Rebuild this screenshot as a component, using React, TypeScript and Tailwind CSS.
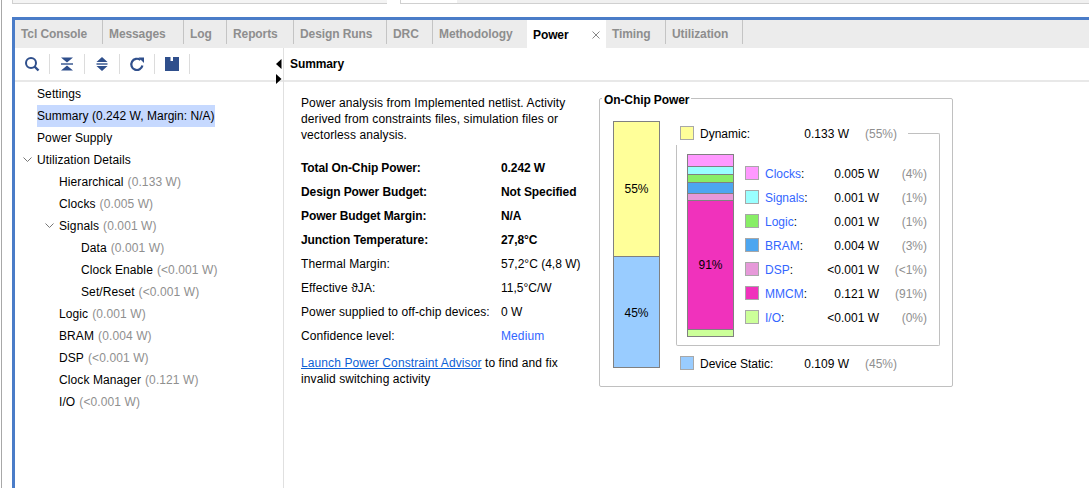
import React from 'react';

const tabs = [
  { label: 'Tcl Console', width: 'w-[88px]' },
  { label: 'Messages', width: 'w-[81px]' },
  { label: 'Log', width: 'w-[43px]' },
  { label: 'Reports', width: 'w-[67px]' },
  { label: 'Design Runs', width: 'w-[93px]' },
  { label: 'DRC', width: 'w-[46px]' },
  { label: 'Methodology', width: 'w-[95px]' },
];

const treeRows = [
  { label: 'Settings', indent: 'pl-[22px]' },
  { label: 'Summary (0.242 W, Margin: N/A)', indent: 'pl-[22px]', selected: true },
  { label: 'Power Supply', indent: 'pl-[22px]' },
  { label: 'Utilization Details', indent: 'pl-[22px]', chevron: 'left-[8px]' },
  { label: 'Hierarchical', value: '(0.133 W)', indent: 'pl-[44px]' },
  { label: 'Clocks', value: '(0.005 W)', indent: 'pl-[44px]' },
  { label: 'Signals', value: '(0.001 W)', indent: 'pl-[44px]', chevron: 'left-[30px]' },
  { label: 'Data', value: '(0.001 W)', indent: 'pl-[66px]' },
  { label: 'Clock Enable', value: '(<0.001 W)', indent: 'pl-[66px]' },
  { label: 'Set/Reset', value: '(<0.001 W)', indent: 'pl-[66px]' },
  { label: 'Logic', value: '(0.001 W)', indent: 'pl-[44px]' },
  { label: 'BRAM', value: '(0.004 W)', indent: 'pl-[44px]' },
  { label: 'DSP', value: '(<0.001 W)', indent: 'pl-[44px]' },
  { label: 'Clock Manager', value: '(0.121 W)', indent: 'pl-[44px]' },
  { label: 'I/O', value: '(<0.001 W)', indent: 'pl-[44px]' },
];

const summaryRows = [
  { label: 'Total On-Chip Power:', value: '0.242 W', bold: true },
  { label: 'Design Power Budget:', value: 'Not Specified', bold: true },
  { label: 'Power Budget Margin:', value: 'N/A', bold: true },
  { label: 'Junction Temperature:', value: '27,8°C', bold: true },
  { label: 'Thermal Margin:', value: '57,2°C (4,8 W)' },
  { label: 'Effective ϑJA:', value: '11,5°C/W' },
  { label: 'Power supplied to off-chip devices:', value: '0 W' },
  { label: 'Confidence level:', value: 'Medium', link: true },
];

const segments = [
  { color: 'bg-[#ff99ff]', height: 'h-[12px]' },
  { color: 'bg-[#99ffff]', height: 'h-[8px]' },
  { color: 'bg-[#88ee66]', height: 'h-[8px]' },
  { color: 'bg-[#4da6f0]', height: 'h-[11px]' },
  { color: 'bg-[#e699d9]', height: 'h-[7px]' },
  { color: 'bg-[#f032bc]', height: 'h-[129px]', label: '91%' },
  { color: 'bg-[#ccff99]', height: 'h-[6px]' },
];

const legend = [
  { name: 'Clocks', color: 'bg-[#ff99ff]', watts: '0.005 W', pct: '(4%)' },
  { name: 'Signals', color: 'bg-[#99ffff]', watts: '0.001 W', pct: '(1%)' },
  { name: 'Logic', color: 'bg-[#88ee66]', watts: '0.001 W', pct: '(1%)' },
  { name: 'BRAM', color: 'bg-[#4da6f0]', watts: '0.004 W', pct: '(3%)' },
  { name: 'DSP', color: 'bg-[#e699d9]', watts: '<0.001 W', pct: '(<1%)' },
  { name: 'MMCM', color: 'bg-[#f032bc]', watts: '0.121 W', pct: '(91%)' },
  { name: 'I/O', color: 'bg-[#ccff99]', watts: '<0.001 W', pct: '(0%)' },
];

const ICON = '#2f4f8c';

const ToolIcon = ({ children }: { children: React.ReactNode }) => (
  <div className="flex h-[20px] w-[35px] items-center justify-center border-r border-[#dcdcdc]">
    <svg width="16" height="16" viewBox="0 0 16 16" fill="none">
      {children}
    </svg>
  </div>
);

const Chevron = ({ className }: { className: string }) => (
  <svg className={className} width="9" height="6" viewBox="0 0 9 6" fill="none">
    <path d="M0.5 0.5 L4.5 4.5 L8.5 0.5" stroke="#777" strokeWidth="1" />
  </svg>
);

const Toolbar = () => (
  <div className="flex h-[34px] items-center border-b-2 border-[#e8e8e8]">
    <ToolIcon>
      <circle cx="7" cy="7" r="5" stroke={ICON} strokeWidth="2" />
      <path d="M10.5 10.5 L14.5 14.5" stroke={ICON} strokeWidth="2.4" />
    </ToolIcon>
    <ToolIcon>
      <path d="M2 1.5 H14 L8 6.5 Z M2 14.5 H14 L8 9.5 Z" fill={ICON} />
      <path d="M2 8 H14" stroke={ICON} strokeWidth="1.4" />
    </ToolIcon>
    <ToolIcon>
      <path d="M8 1 L13.5 6 H2.5 Z M8 15 L13.5 10 H2.5 Z" fill={ICON} />
      <path d="M2.5 8 H13.5" stroke={ICON} strokeWidth="1.4" />
    </ToolIcon>
    <ToolIcon>
      <path d="M13.4 9.5 A5.6 5.6 0 1 1 11.4 4" stroke={ICON} strokeWidth="2.2" />
      <path d="M9.5 1.5 H15 V7 Z" fill={ICON} />
    </ToolIcon>
    <ToolIcon>
      <path d="M1 1 H6.5 V5 H9 V1 H15 V15 H1 Z" fill={ICON} />
    </ToolIcon>
  </div>
);

const Swatch = ({ color }: { color: string }) => (
  <span className={`block h-[14px] w-[14px] shrink-0 border border-[#a8a8a8] ${color}`} />
);

const App = () => {
  return (
    <div className="flex h-[488px] w-[1089px] overflow-hidden bg-white font-['Liberation_Sans',Arial,sans-serif] text-[12px] leading-[16px] tracking-[0.1px] text-black">
      <div className="ml-px w-[11px] shrink-0 border-l border-[#a8a8a8]" />
      <div className="flex min-w-0 flex-1 flex-col">
        <div className="flex h-[17px] shrink-0 items-start">
          <div className="h-[4px] w-[375px] border-b border-l border-[#d0d0d0] bg-[#f4f4f4]" />
          <div className="ml-[13px] flex h-[4px] flex-1 border-b border-l border-[#d0d0d0] bg-[#f0f0f0]">
            <div className="h-full w-[56px] bg-white" />
          </div>
        </div>
        <div className="flex min-h-0 flex-1 flex-col border-l-[3px] border-t-[3px] border-[#4a7cc8]">
          <div className="flex h-[28px] shrink-0 items-start bg-[#ececec] text-[12px] font-bold tracking-[-0.1px] text-[#8e8e8e]">
            {tabs.map((tab) => (
              <div key={tab.label} className={`flex h-[24px] items-center border-r border-[#c4c4c4] pl-[6px] pt-[4px] ${tab.width}`}>
                {tab.label}
              </div>
            ))}
            <div className="-ml-px flex h-[28px] w-[79px] items-start justify-between bg-white pl-[6px] pr-[6px] pt-[7px] text-black">
              Power
              <svg className="mt-[4px]" width="8" height="8" viewBox="0 0 8 8" fill="none">
                <path d="M0.5 0.5 L7.5 7.5 M7.5 0.5 L0.5 7.5" stroke="#888" strokeWidth="1" />
              </svg>
            </div>
            <div className="flex h-[24px] w-[60px] items-center border-r border-[#c4c4c4] pl-[6px] pt-[4px]">Timing</div>
            <div className="flex h-[24px] w-[77px] items-center border-r border-[#c4c4c4] pl-[6px] pt-[4px]">Utilization</div>
          </div>

          <div className="flex min-h-0 flex-1">
            <div className="relative w-[269px] shrink-0 border-r border-[#e0e0e0]">
              <Toolbar />
              <div className="pt-px">
                {treeRows.map((row) => (
                  <div key={row.label} className={`relative flex h-[22px] items-center whitespace-nowrap ${row.indent}`}>
                    {row.chevron && <Chevron className={`absolute top-[8px] ${row.chevron}`} />}
                    <span className={row.selected ? 'flex h-[22px] items-center bg-[#c6d9ff] tracking-[0.03px]' : ''}>{row.label}</span>
                    {row.value && <span className="ml-[4px] text-[#8f8f8f]">{row.value}</span>}
                  </div>
                ))}
              </div>
              <svg className="absolute left-[261px] top-[11px]" width="6" height="10" viewBox="0 0 6 10">
                <path d="M5.5 0 V10 L0 5 Z" fill="#000" />
              </svg>
              <svg className="absolute left-[261px] top-[26px]" width="6" height="10" viewBox="0 0 6 10">
                <path d="M0 0 V10 L5.5 5 Z" fill="#000" />
              </svg>
            </div>

            <div className="min-w-0 flex-1">
              <div className="flex h-[34px] items-center border-b-2 border-[#e8e8e8] pl-[6px] font-bold tracking-[-0.1px]">Summary</div>
              <div className="flex">
                <div className="w-[315px] shrink-0 pl-[17px] pt-[13px]">
                  <p className="w-[280px]">
                    Power analysis from Implemented netlist. Activity derived from constraints files, simulation files or vectorless analysis.
                  </p>
                  <div className="mt-[13px]">
                    {summaryRows.map((row) => (
                      <div key={row.label} className={`flex h-[24px] items-center whitespace-nowrap ${row.bold ? 'font-bold tracking-[-0.1px]' : ''}`}>
                        <span className="w-[200px] shrink-0">{row.label}</span>
                        <span className={row.link ? 'text-[#3366ff]' : row.bold ? '' : 'tracking-normal'}>{row.value}</span>
                      </div>
                    ))}
                  </div>
                  <p className="mt-[7px] w-[280px]">
                    <a className="text-[#0d5fd6] underline">Launch Power Constraint Advisor</a> to find and fix invalid switching activity
                  </p>
                </div>

                <div className="relative mt-[16px] flex h-[289px] w-[354px] shrink-0 gap-[16px] rounded-[2px] border border-[#c0c0c0] pl-[13px] pt-[22px] tracking-normal">
                  <span className="absolute -top-[7px] left-[2px] bg-white px-[2px] font-bold tracking-[-0.1px]">On-Chip Power</span>
                  <div className="flex h-[247px] w-[47px] shrink-0 flex-col border border-[#808080]">
                    <div className="flex h-[135px] items-center justify-center border-b border-[#808080] bg-[#ffff99]">55%</div>
                    <div className="flex flex-1 items-center justify-center bg-[#99ccff] pt-[2px]">45%</div>
                  </div>
                  <div className="w-[264px] shrink-0">
                    <div className="flex h-[24px] items-center pl-[4px]">
                      <Swatch color="bg-[#ffff99]" />
                      <span className="ml-[6px] w-[100px] pt-px">Dynamic:</span>
                      <span className="w-[49px] pt-px text-right">0.133 W</span>
                      <span className="w-[48px] pt-px text-right text-[#8f8f8f]">(55%)</span>
                      <div className="ml-[11px] h-[12px] flex-1 self-end rounded-tr-[2px] border-r border-t border-[#c0c0c0]" />
                    </div>
                    <div className="flex h-[201px] rounded-b-[2px] border-x border-b border-[#c0c0c0] pl-[10px] pt-[9px]">
                      <div className="flex h-[183px] w-[47px] shrink-0 flex-col border border-[#808080]">
                        {segments.map((seg, i) => (
                          <div
                            key={seg.color}
                            className={`flex items-center justify-center ${seg.color} ${seg.height} ${i < segments.length - 1 ? 'border-b border-[#808080]' : ''}`}
                          >
                            {seg.label}
                          </div>
                        ))}
                      </div>
                      <div className="ml-[11px] pt-[7px]">
                        {legend.map((item) => (
                          <div key={item.name} className="flex h-[24px] items-center whitespace-nowrap">
                            <Swatch color={item.color} />
                            <span className="ml-[6px] w-[60px] pt-px">
                              <span className="text-[#3366ff]">{item.name}</span>:
                            </span>
                            <span className="w-[54px] pt-px text-right">{item.watts}</span>
                            <span className="w-[48px] pt-px text-right text-[#8f8f8f]">{item.pct}</span>
                          </div>
                        ))}
                      </div>
                    </div>
                    <div className="mt-[5px] flex h-[24px] items-center pl-[4px]">
                      <Swatch color="bg-[#99ccff]" />
                      <span className="ml-[6px] w-[100px] pt-px">Device Static:</span>
                      <span className="w-[49px] pt-px text-right">0.109 W</span>
                      <span className="w-[48px] pt-px text-right text-[#8f8f8f]">(45%)</span>
                    </div>
                  </div>
                </div>
              </div>
            </div>
          </div>
        </div>
      </div>
    </div>
  );
};

export default App;
